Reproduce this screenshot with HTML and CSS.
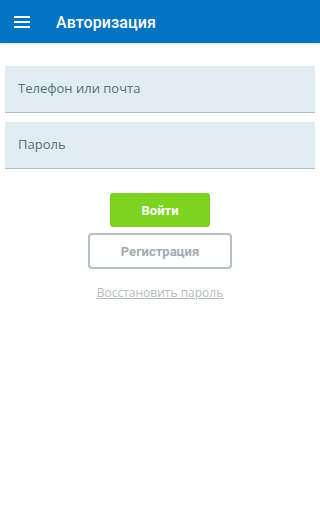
FILE: index.html
```html
<!DOCTYPE html>
<html lang="ru">
<head>
<meta charset="utf-8">
<link rel="stylesheet" href="styles.css">
</head>
<body>
<header class="bar">
  <svg class="menu" width="16" height="12" viewBox="0 0 16 12"><rect x="0" y="0" width="16" height="2" fill="#fff"/><rect x="0" y="5" width="16" height="2" fill="#fff"/><rect x="0" y="10" width="16" height="2" fill="#fff"/></svg>
  <h1 class="title">Авторизация</h1>
</header>
<main class="content">
  <div class="field">Телефон или почта</div>
  <div class="field">Пароль</div>
  <div class="actions">
    <button class="btn-login">Войти</button>
    <button class="btn-reg">Регистрация</button>
    <a class="restore">Восстановить пароль</a>
  </div>
</main>
</body>
</html>
```
FILE: styles.css
```css
* { box-sizing: border-box; }
html, body { margin: 0; padding: 0; background: #fff; }
body { width: 320px; height: 512px; font-family: Roboto, "Noto Sans", sans-serif; }
.bar {
  height: 43px;
  background: #0274c2;
  display: flex;
  align-items: center;
  padding-left: 14px;
  box-shadow: 0 1px 2px rgba(0,0,0,0.15);
}
.menu { display: block; margin-top: 1px; }
.title {
  margin: 2px 0 0 26px;
  color: #fff;
  font-size: 16px;
  font-weight: 500;
  letter-spacing: 0.1px;
}
.content {
  padding: 23px 5px 0;
  display: flex;
  flex-direction: column;
  gap: 9px;
}
.field {
  height: 47px;
  background: #e0eef4;
  border-bottom: 1px solid #a7c1c9;
  font-family: "Open Sans", "Noto Sans", sans-serif;
  font-size: 13px;
  color: #5a6e73;
  padding: 13px 0 0 13px;
}
.actions {
  display: flex;
  flex-direction: column;
  align-items: center;
  padding-top: 15px;
}
.btn-login {
  width: 100px;
  height: 34px;
  border: 0;
  border-radius: 3px;
  background: #7ed321;
  color: #fff;
  font-family: Roboto, sans-serif;
  font-weight: 700;
  font-size: 13px;
  padding: 0;
}
.btn-reg {
  margin-top: 6px;
  width: 144px;
  height: 36px;
  border: 2px solid #b7bfc3;
  border-radius: 4px;
  background: #fff;
  color: #a2acb1;
  font-family: Roboto, sans-serif;
  font-weight: 700;
  font-size: 13px;
  padding: 0;
}
.restore {
  margin-top: 15px;
  font-family: "Open Sans", "Noto Sans", sans-serif;
  font-size: 12px;
  color: #b4bcc0;
  text-decoration: underline;
}
```
